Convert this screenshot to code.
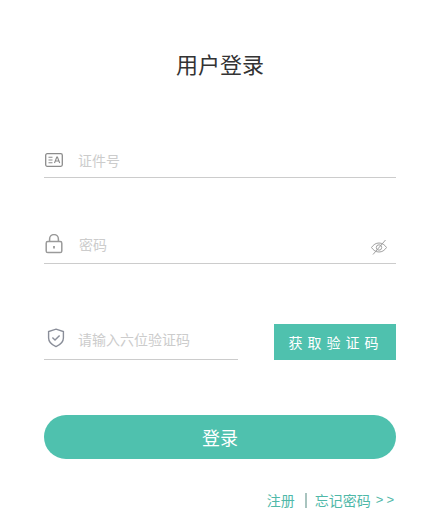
<div class="page">
  <h1 class="title">用户登录</h1>

  <div class="field first">
    <svg class="icon" width="18" height="14" viewBox="0 0 18 14" fill="none" stroke="#8c8c8c" stroke-width="1.300" aria-hidden="true">
      <rect x="0.700" y="0.700" width="16.600" height="12.600" rx="1.500"/>
      <path d="M3.500 4.300h4M3.500 7h4M3.500 9.700h4" stroke-width="1.100"/>
      <path d="M9.500 10l2.300-6h.6l2.300 6M10.500 8h3.200" stroke-width="1.100"/>
    </svg>
    <span class="hint">证件号</span>
  </div>

  <div class="field second">
    <svg class="icon lock" width="18" height="20" viewBox="0 0 18 20" fill="none" stroke="#9a9a9a" stroke-width="1.500" aria-hidden="true">
      <rect x="1.200" y="7.600" width="15.600" height="11" rx="1.600"/>
      <path d="M4.600 7.600V5a4.400 4.400 0 0 1 8.800 0v2.600"/>
      <path d="M9 12v2.400" stroke-width="1.800"/>
    </svg>
    <span class="hint">密码</span>
    <svg class="eye" width="18" height="18" viewBox="0 0 18 18" fill="none" stroke="#a0a0a0" stroke-width="1" aria-hidden="true">
      <path d="M1.500 9.500C3.500 6.500 6 5 9 5s5.500 1.500 7.500 4.500C14.500 12.500 12 14 9 14s-5.500-1.500-7.500-4.500z"/>
      <circle cx="9" cy="9.500" r="2.700"/>
      <path d="M3 16.500L15.500 2"/>
    </svg>
  </div>

  <div class="code-row">
    <div class="field code">
      <svg class="icon shield" width="18" height="20" viewBox="0 0 18 20" fill="none" stroke="#8a8e99" stroke-width="1.400" aria-hidden="true">
        <path d="M9 1.200L16.400 3.500V10c0 4-3.200 6.800-7.400 8.600C4.800 16.800 1.600 14 1.600 10V3.500z"/>
        <path d="M5.400 9.500l2.600 2.500 4.600-4.600"/>
      </svg>
      <span class="hint">请输入六位验证码</span>
    </div>
    <button class="send" type="button">获取验证码</button>
  </div>

  <button class="submit" type="button">登录</button>

  <div class="links">
    <span>注册</span>
    <span class="bar"></span>
    <span>忘记密码</span>
    <span class="more">&gt;&gt;</span>
  </div>
</div>

<style>
  :global(body) {
    margin: 0;
    background: #fff;
  }
  .page {
    width: 435px;
    height: 529px;
    box-sizing: border-box;
    padding: 0 39px 0 44px;
    font-family: "Noto Sans CJK SC", "Liberation Sans", sans-serif;
    overflow: hidden;
  }
  .title {
    margin: 0;
    padding-top: 46px;
    height: 34px;
    line-height: 34px;
    text-align: center;
    font-size: 22px;
    font-weight: 400;
    color: #333;
  }
  .field {
    display: flex;
    align-items: center;
    box-sizing: border-box;
    height: 37px;
    border-bottom: 1px solid #ccc;
  }
  .first { margin-top: 61px; padding-top: 2px; }
  .second { margin-top: 49px; padding-bottom: 2px; }
  .icon { margin: 0 0 0 1px; flex: none; }
  .hint {
    margin-left: 16px;
    font-size: 14px;
    color: #ccc;
    line-height: 20px;
  }
  .first .hint { margin-left: 15px; }
  .eye { margin-left: auto; margin-right: 8px; margin-top: 6px; }
  .code-row {
    display: flex;
    justify-content: space-between;
    align-items: flex-end;
    margin-top: 60px;
  }
  .code { width: 194px; height: 36px; padding-bottom: 6px; }
  .shield { margin-top: -1px; margin-left: 3px; }
  .code .hint { margin-left: 13px; }
  .send {
    width: 122px;
    height: 36px;
    border: 0;
    padding: 0 0 0 2px;
    background: #4fc1ae;
    color: #fff;
    font: inherit;
    font-size: 14px;
    letter-spacing: 5px;
  }
  .submit {
    display: block;
    width: 100%;
    height: 44px;
    margin-top: 55px;
    border: 0;
    border-radius: 22px;
    background: #4fc1ae;
    color: #fff;
    font: inherit;
    font-size: 18px;
  }
  .links {
    display: flex;
    justify-content: flex-end;
    align-items: center;
    margin-top: 31px;
    font-size: 14px;
    line-height: 20px;
    color: #4fb8a8;
  }
  .bar {
    width: 2px;
    height: 15px;
    margin: 0 8px 0 10px;
    background: #a9c4bf;
  }
  .more {
    margin-left: 5px;
    margin-right: -1px;
    letter-spacing: 3px;
    font-family: "Liberation Sans", sans-serif;
    font-size: 13px;
  }
</style>
